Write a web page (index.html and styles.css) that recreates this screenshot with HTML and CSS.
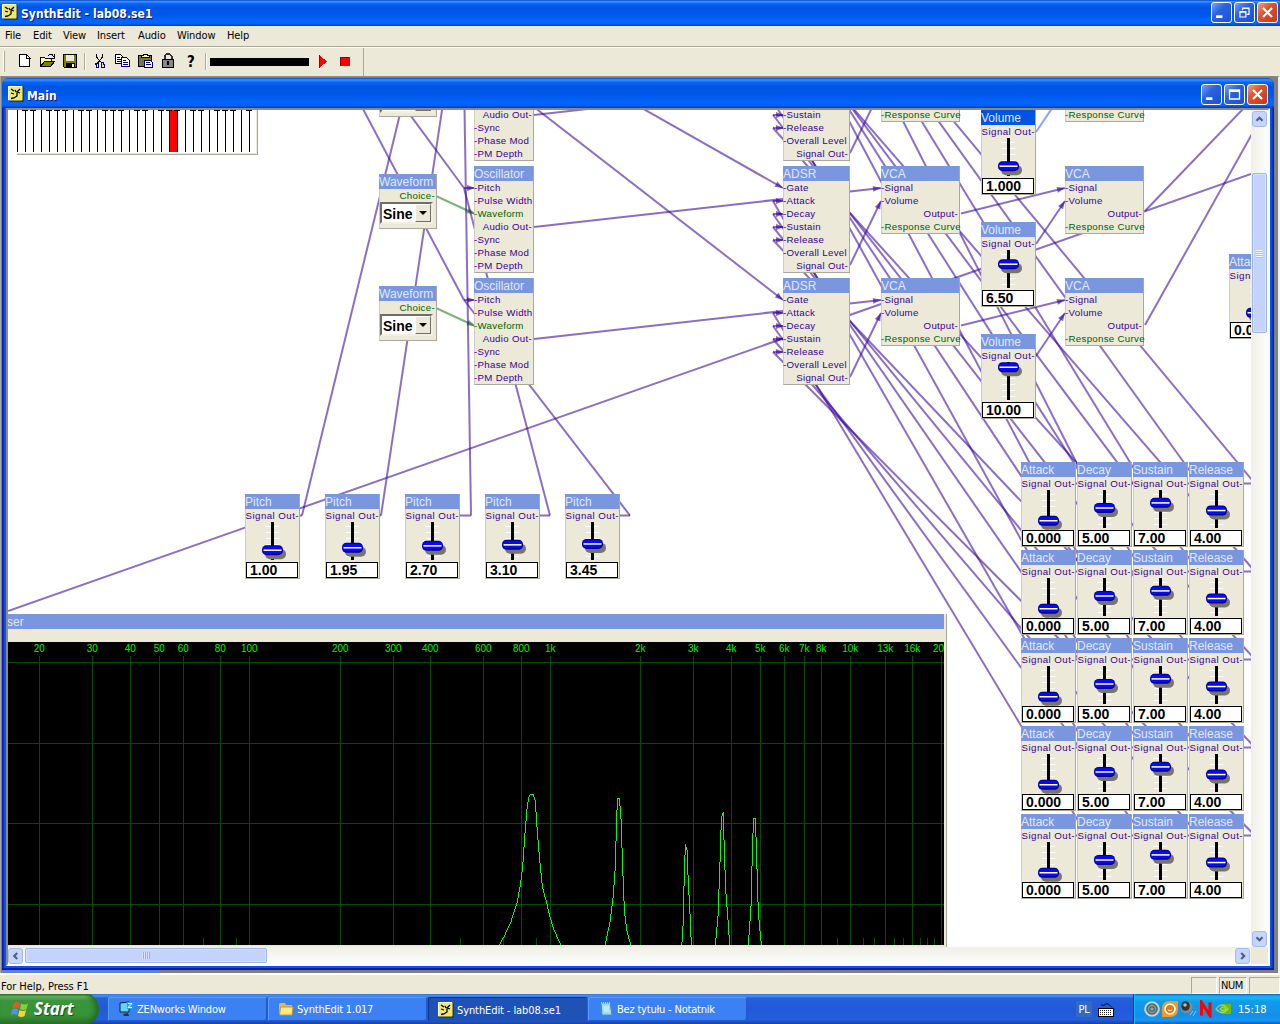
FILE: index.html
```html
<!DOCTYPE html>
<html lang="en">
<head>
<meta charset="utf-8">
<title>SynthEdit - lab08.se1</title>
<link rel="stylesheet" href="styles.css">
</head>
<body>
<svg class="defs" width="0" height="0">
  <symbol id="app" viewBox="0 0 16 16">
    <rect x="1" y="1" width="15" height="15" rx="1" fill="#3a3a20"/>
    <rect width="14.500" height="14.500" rx="1" fill="#efe96e"/>
    <path d="M.5 14V.5H14" stroke="#fffde0" fill="none"/>
    <path d="M3 3l3 2M7 4l1 2M12 3l-3 3 3 1M3 7l3 1M9 7v3l-3 2-3 .5" stroke="#000" stroke-width="1.300" fill="none"/>
  </symbol>
  <symbol id="min" viewBox="0 0 21 21"><path d="M4.500 15h7" stroke="#fff" stroke-width="3"/></symbol>
  <symbol id="max" viewBox="0 0 21 21"><path d="M5 5.500h11v10H5zM5 7h11" stroke="#fff" fill="none" stroke-width="1.500"/></symbol>
  <symbol id="restore" viewBox="0 0 21 21"><path d="M8.500 8V5.500h7v7H13M8 6h8M5.500 9.500h6.500v6H5.500zM5 10h7" stroke="#fff" fill="none" stroke-width="1.300"/></symbol>
  <symbol id="close" viewBox="0 0 21 21"><path d="M5.500 5.500l10 10M15.500 5.500l-10 10" stroke="#fff" stroke-width="2.400"/></symbol>
</svg>
<div class="screen">
  <header class="caption main-caption">
    <svg class="app-icon" width="16" height="16"><use href="#app"/></svg>
    <span class="caption-text">SynthEdit - lab08.se1</span>
    <span class="buttons">
      <svg class="cap-btn" viewBox="0 0 21 21"><use href="#min"/></svg>
      <svg class="cap-btn" viewBox="0 0 21 21"><use href="#restore"/></svg>
      <svg class="cap-btn red" viewBox="0 0 21 21"><use href="#close"/></svg>
    </span>
  </header>
  <nav class="menu"><span>File</span><span>Edit</span><span>View</span><span>Insert</span><span>Audio</span><span>Window</span><span>Help</span></nav>
  <div class="toolbar">
    <svg width="364" height="28" viewBox="0 48 364 28" shape-rendering="crispEdges">
      <path d="M3.500 51v21" stroke="#fff"/><path d="M4.500 51v21" stroke="#aca899"/>
      <path d="M19.500 54.500h7l3 3v9h-10z" fill="#fff" stroke="#000"/><path d="M26.500 54v4h4" fill="none" stroke="#000"/>
      <path d="M40.500 66v-8.500h4l1 1h6v3" fill="#ffff80" stroke="#000"/><path d="M40.500 66.500l4-5h10l-4 5z" fill="#808000" stroke="#000"/><path d="M48 56l2-1.500h2l2 2.500M54.500 54v4h-3" fill="none" stroke="#000"/>
      <path d="M63.500 54.500h13v13h-12l-1-1z" fill="#808000" stroke="#000"/><path d="M66 55h8v6h-8z" fill="#ece9d8"/><path d="M66 63h9v4h-9z" fill="#000"/><path d="M72 64h2v3h-2z" fill="#fff"/>
      <path d="M84.500 53v17" stroke="#aca899"/><path d="M85.500 53v17" stroke="#fff"/>
      <path d="M96.500 54v3l4 5M102.500 54v3l-5 6" fill="none" stroke="#000"/><path d="M95.500 63.500h3v4h-2.500v-3zM101 62.500h2l1 2v2.500h-3z" fill="none" stroke="#000080"/>
      <path d="M115.500 54.500h5l3 3v6h-8z" fill="#fff" stroke="#000"/><path d="M117 57.500h3M117 59.500h5M117 61.500h5" stroke="#000"/><path d="M121.500 57.500h5l3 3v6h-8z" fill="#fff" stroke="#000080"/><path d="M123 60.500h3M123 62.500h5M123 64.500h5" stroke="#000080"/>
      <path d="M138.500 55.500h13v11h-13z" fill="#77754a" stroke="#000"/><path d="M141 57h8v-2h-2v-1h-4v1h-2z" fill="#ffff80" stroke="#000"/><path d="M144.500 60.500h6l2 2v5h-8z" fill="#fff" stroke="#000080"/><path d="M146 62.500h4M146 64.500h5" stroke="#000080"/>
      <path d="M164.500 60v-4l2-2h3l2 2v4" fill="none" stroke="#333" stroke-width="2"/><path d="M162.500 59.500h11v8h-11z" fill="#888" stroke="#000"/><path d="M167 61h2v4h-2z" fill="#000"/>
      <text class="tool-help" x="187" y="67">?</text>
      <path d="M205.500 53v17" stroke="#aca899"/><path d="M206.500 53v17" stroke="#fff"/>
      <path d="M210 58h99v8h-99z"/>
      <path d="M319 55v13l8-6.500z" fill="#f00"/><path d="M319.500 55v13" stroke="#900"/>
      <path d="M340 57h10v9h-10z" fill="#f00"/><path d="M340.500 66v-8.500h9.500" stroke="#900" fill="none"/>
      <path d="M363.500 48v28" stroke="#aca899"/>
    </svg>
  </div>
  <main class="mdi">
    <section class="child">
      <div class="caption child-caption">
        <svg class="app-icon" width="16" height="16"><use href="#app"/></svg>
        <span class="caption-text">Main</span>
        <span class="buttons">
          <svg class="cap-btn" viewBox="0 0 21 21"><use href="#min"/></svg>
          <svg class="cap-btn" viewBox="0 0 21 21"><use href="#max"/></svg>
          <svg class="cap-btn red" viewBox="0 0 21 21"><use href="#close"/></svg>
        </span>
      </div>
      <div class="client">
        <div class="canvas" id="canvas">
          <svg class="wires" id="wires" width="1243" height="837" viewBox="8 110 1243 837"></svg>
        </div>
        <div class="vscroll">
          <svg class="sb" viewBox="0 0 15 16"><path d="M4 10l3.500-3.500L11 10" /></svg>
          <div class="vthumb"><i></i><i></i><i></i><i></i></div>
          <svg class="sb sb-end" viewBox="0 0 15 16"><path d="M4 6l3.500 3.500L11 6"/></svg>
        </div>
        <div class="hscroll">
          <svg class="sb" viewBox="0 0 15 16"><path d="M9.500 4.500L6 8l3.500 3.500"/></svg>
          <div class="hthumb"><i></i><i></i><i></i><i></i></div>
          <svg class="sb sb-end" viewBox="0 0 15 16"><path d="M6 4.500L9.500 8 6 11.500"/></svg>
        </div>
        <div class="corner"></div>
      </div>
    </section>
    <div class="minimized"></div>
  </main>
  <div class="status"><span class="help">For Help, Press F1</span><span class="pane p1"></span><span class="pane p2">NUM</span><span class="pane p3"></span></div>
  <footer class="taskbar">
    <div class="start">
      <svg width="20" height="20" viewBox="0 0 20 20"><path d="M3 4q3-2 6 0L7.500 9.500q-3-2-6 0z" fill="#e8562a"/><path d="M10 4.500q3 2 7 0L15.500 10q-3 2-6.500 0z" fill="#8ccc3c"/><path d="M1.200 10.500q3-2 6 0L6 16q-3-2-6 0z" fill="#5a8cf0"/><path d="M8.500 11q3 2 6.500 0L13.500 17q-3 2-6.500 0z" fill="#fcd03c"/></svg>
      <span>Start</span>
    </div>
    <div class="task"><svg width="16" height="16" viewBox="0 0 16 16"><path d="M2 2l9-1v10L2 11z" fill="#5fd4f4" stroke="#123"/><path d="M9 1h6v7H9z" fill="#2a9fdc"/><path d="M10 2.500h4l-4 4h4" stroke="#fff" fill="none"/><path d="M5 13l5-1 1 3H6z" fill="#333"/></svg><span>ZENworks Window</span></div>
    <div class="task"><svg width="16" height="16" viewBox="0 0 16 16"><path d="M1 3l1-1h5l1 2h6v10H1z" fill="#e8b93c"/><path d="M1.500 14l1-8H15l-1 8z" fill="#ffe88a" stroke="#c89420"/></svg><span>SynthEdit 1.017</span></div>
    <div class="task active"><svg width="16" height="16"><use href="#app"/></svg><span>SynthEdit - lab08.se1</span></div>
    <div class="task"><svg width="16" height="16" viewBox="0 0 16 16"><path d="M3 2h9l2 12H4z" fill="#9fdcf0" stroke="#4a90b0"/><path d="M3 2h9" stroke="#e0c070" stroke-width="2" stroke-dasharray="1 1"/><path d="M5 6h6M5 8h6M6 10h6" stroke="#d8f6ff"/></svg><span>Bez tytułu - Notatnik</span></div>
    <div class="lang">PL</div>
    <svg class="kbd" width="16" height="14" viewBox="0 0 16 14"><path d="M3 1.500q2 2 4 0t4 0 3 3" fill="none" stroke="#111"/><rect x=".5" y="5.500" width="15" height="8" fill="#fff" stroke="#000"/><path d="M2 7.500h12M2 9.500h12M2 11.500h12" stroke="#222" stroke-dasharray="1 1"/></svg>
    <div class="tray">
      <svg width="88" height="18" viewBox="1143 1000 88 18">
        <circle cx="1152" cy="1009" r="7.800" fill="#c4d2d5"/><circle cx="1152" cy="1009" r="5.800" fill="#4c656a"/><circle cx="1152" cy="1009" r="3.500" fill="none" stroke="#8aa2a4" stroke-width="1.300"/><circle cx="1152" cy="1009" r="1.500" fill="#9ab"/>
        <path d="M1162 1009q0-8 8-8h8v8q0 8-8 8h-8z" fill="#f19a1f"/><circle cx="1170" cy="1009" r="5.800" fill="#fff"/><circle cx="1170" cy="1009" r="4" fill="#e8760a"/><path d="M1168 1010q2 1.500 4 0" stroke="#fff" fill="none"/>
        <ellipse cx="1186.500" cy="1007" rx="6" ry="6" fill="#8a8a8a"/><ellipse cx="1185.500" cy="1006" rx="4.300" ry="4.800" fill="#333"/><circle cx="1185" cy="1005" r="1.800" fill="#bbb"/><path d="M1190 1015l3-4M1193 1016l3-5" stroke="#93b7ff"/>
        <path d="M1201.500 1015.500v-13l8.500 13v-13" fill="none" stroke="#f00" stroke-width="3"/>
        <path d="M1221 1004h10v10h-10z" fill="#76b900"/><path d="M1216 1009q6-8 12 0-6 7-12 0zM1220 1009q3-4 6 0-3 3-6 0z" fill="none" stroke="#9fdc50" stroke-width="1.200"/>
      </svg>
      <span>15:18</span>
    </div>
  </footer>
</div>
<script src="script.js"></script>
</body>
</html>
```
FILE: styles.css
```css
* { box-sizing: border-box; }
body { margin: 0; font: 11px "DejaVu Sans Condensed", "Liberation Sans", sans-serif; color: #000; overflow: hidden; }
svg { display: block; flex: none; }
.defs { position: absolute; }
.screen { width: 1280px; height: 1024px; display: flex; flex-direction: column; background: #ece9d8; overflow: hidden; }

.caption { display: flex; flex: none; color: #fff; background: linear-gradient(#0842c8 0, #3c91ff 6%, #0866f2 14%, #0055e5 28%, #0058ea 55%, #0266ff 82%, #0260f5 92%, #0038b8 100%); }
.main-caption { height: 26px; padding: 2px 2px 0 2px; }
.app-icon { margin-top: 2px; }
.caption-text { font: bold 12px/24px "DejaVu Sans Condensed", sans-serif; letter-spacing: .05px; margin-left: 3px; text-shadow: 1px 1px 0 #0a1883; white-space: nowrap; }
.buttons { margin-left: auto; display: flex; gap: 2px; }
.cap-btn { width: 21px; height: 21px; border: 1px solid #fff; border-radius: 3px; background: linear-gradient(135deg, #7ba0f6, #2a62e4 40%, #1c50d4); }
.cap-btn.red { background: linear-gradient(135deg, #f0a085, #e0502c 40%, #c93a12); }

.menu { height: 20px; flex: none; display: grid; grid-template-columns: 28px 30px 34px 41px 39px 50px 40px; padding-left: 5px; line-height: 20px; letter-spacing: -.1px; }
.toolbar { height: 30px; flex: none; border-top: 1px solid #aca899; box-shadow: inset 0 1px #fff; padding-top: 1px; }
.tool-help { font: bold 15px "DejaVu Sans Condensed", sans-serif; }

.mdi { height: 897px; flex: none; background: #808080; border-top: 1px solid #8d8a7c; border-right: 2px solid #f4f2e8; border-left: 1px solid #aca899; padding: 1px 0 0 1px; }
.child { width: 1272px; height: 892px; background: linear-gradient(90deg, #0016b0 0, #0b55ee 3px, #0b55ee 1269px, #0016a0 1272px); box-shadow: inset 0 -2px #0020a8; border-radius: 7px 7px 0 0; padding: 0 4px 4px; overflow: hidden; }
.child-caption { height: 30px; margin: 0 -4px; padding: 6px 6px 0 6px; }
.child-caption .app-icon { margin-top: 2px; }
.client { width: 1264px; height: 858px; border: 2px solid; border-color: #8e8b7c #fff #fff #8e8b7c; background: #fff; display: grid; grid-template-columns: 1243px 17px; grid-template-rows: 837px 17px; }
.minimized { width: 156px; height: 3px; margin-left: 2px; background: #5c7fe0; border-radius: 0 0 6px 0; }
.corner { background: #ece9d8; }

.vscroll { display: flex; flex-direction: column; align-items: center; background: linear-gradient(90deg, #f0efe8, #fefefb); padding: 1px 0 0; }
.hscroll { display: flex; align-items: center; background: linear-gradient(#f0efe8, #fefefb); padding-right: 1px; }
.sb { width: 15px; height: 16px; border: 1px solid #a5bbef; border-radius: 3px; background: #c6d5fd; }
.sb path { fill: none; stroke: #4d6185; stroke-width: 2.500; }
.vscroll .sb-end { margin-top: auto; }
.hscroll .sb-end { margin-left: auto; }
.vthumb, .hthumb { border: 1px solid #9db5ee; border-radius: 2px; background: #c3d3fc; display: flex; justify-content: center; align-items: center; gap: 1px; box-shadow: inset 0 0 0 1px #d6e2ff; }
.vthumb { width: 15px; height: 160px; margin-top: 46px; flex-direction: column; }
.vthumb i { width: 7px; height: 1px; background: #eef4fe; box-shadow: 0 .5px #8cb0f8; }
.hthumb { width: 242px; height: 15px; margin-left: 2px; }
.hthumb i { width: 1px; height: 7px; background: #8cb0f8; box-shadow: -.5px 0 #eef4fe; }

.canvas { position: relative; overflow: hidden; background: #fff; font-family: "Liberation Sans", sans-serif; }
.wires { position: absolute; left: 0; top: 0; }
.wires line { stroke: #330099; stroke-width: 2; opacity: .56; }
.wires polygon { fill: #330099; opacity: .6; }
.wires .green { stroke: #1b7a1b; }
.wires polygon.green { fill: #1b7a1b; stroke: none; }
.wires .sel { stroke: #2a5cff; }

.module { position: absolute; background: #ece9d8; border: 1px solid #aca899; border-left-color: #d0cdbd; border-top: 0; display: flex; flex-direction: column; }
.module h3 { margin: 0 0 0 -1px; height: 15px; flex: none; background: #7a96df; color: #dfe8fa; font: 12px/16px "Liberation Sans", sans-serif; white-space: nowrap; }
.module h3.on { background: #0054e3; }
.port { height: 13px; flex: none; line-height: 13px; font-size: 9.700px; letter-spacing: .3px; color: #330099; white-space: nowrap; margin-left: -1px; }
.port::before { content: "-"; }
.port.out { text-align: right; padding-right: 1px; }
.port.out::before { content: none; }
.port.out::after { content: "-"; }
.port.g { color: #006000; }
.slider-mod .port { padding: 0; letter-spacing: .45px; }
.value { width: 52px; height: 16px; border: 1px solid #000; background: #fff; font: bold 14px/14px "Liberation Sans", sans-serif; padding-left: 3px; white-space: nowrap; }
.select { width: 53px; height: 22px; border: 2px solid; border-color: #716f64 #f1efe2 #f1efe2 #716f64; background: #fff; display: flex; font: bold 14px/20px "Liberation Sans", sans-serif; padding-left: 1px; justify-content: space-between; }
.select svg { width: 16px; height: 18px; border: 1px solid; border-color: #fff #716f64 #716f64 #fff; background: #ece9d8; }
.select.cut { height: 5px; border-top: 0; }
.select.cut svg { height: 3px; }

.keyboard { position: absolute; left: 9px; top: 0; width: 241px; height: 45px; border: solid #aca899; border-width: 0 1px 1px 0; background: #ece9d8; }
.analyser { position: absolute; left: 0; top: 504px; width: 939px; height: 333px; background: #ece9d8; border-right: 1px solid #aca899; }
.analyser h3 { margin: 0; width: 936px; height: 15px; background: #7a96df; color: #dfe8fa; font: 12px/16px "Liberation Sans", sans-serif; text-indent: -1px; }
.analyser svg { margin-top: 13px; background: #000; }
.analyser text { fill: #00f000; font: 10px "Liberation Sans", sans-serif; text-anchor: middle; }

.status { height: 21px; flex: none; border-top: 2px solid #fffef8; display: flex; gap: 2px; padding-top: 2px; }
.help { margin: 1px auto 0 1px; line-height: 18px; letter-spacing: -.05px; }
.pane { border: 1px solid; border-color: #aca899 #fff #fff #aca899; height: 17px; line-height: 16px; padding-left: 1px; letter-spacing: -.4px; }
.p1 { width: 26px; } .p2 { width: 28px; } .p3 { width: 31px; }

.taskbar { height: 30px; flex: none; display: flex; background: linear-gradient(#3168d5 0, #4993e6 5%, #245fdc 15%, #2259d8 50%, #245edb 85%, #1941a5 100%); color: #fff; padding-left: 0; }
.start { width: 99px; margin-right: 9px; border-radius: 0 12px 12px 0 / 0 15px 15px 0; background: linear-gradient(#2d7a2d 0, #6cb46c 8%, #3b953b 22%, #379337 70%, #2a722a 100%); box-shadow: inset -4px 0 5px #246b24; display: flex; align-items: center; padding-left: 11px; }
.start span { font: italic bold 17px/28px "Open Sans", sans-serif; letter-spacing: -.1px; margin-left: 3px; text-shadow: 1px 1px 1px #1c4a1c; }
.task { width: 159px; height: 24px; margin: 3px 1px 0 0; border-radius: 2px; background: #3c81f3; box-shadow: inset 1px 1px #5c9bff, inset -1px -1px #2158cc; display: flex; align-items: center; padding-left: 10px; gap: 3px; letter-spacing: -.2px; white-space: nowrap; }
.task.active { background: #1e52b7; box-shadow: inset 1px 1px #10358c; letter-spacing: -.1px; padding-top: 2px; }
.lang { margin: 7px 0 0 328px; width: 16px; height: 16px; background: #316ac5; font: 11px/18px "DejaVu Sans Condensed", sans-serif; letter-spacing: -.3px; text-align: center; }
.kbd { margin: 9px 0 0 6px; }
.tray { margin-left: auto; width: 147px; background: linear-gradient(#0c59b9 0, #139ee9 5%, #18b5f2 12%, #129be8 25%, #1290e8 70%, #1895f0 88%, #095bc9 100%); border-left: 1px solid #0a3c90; box-shadow: inset 1px 0 #18bbff; display: flex; align-items: center; padding-left: 9px; gap: 7px; }
```
FILE: script.js
```js
const OX = 8, OY = 110;
const canvas = document.getElementById('canvas');
const parts = [];

// Wires
function line(x1, y1, x2, y2, cls = '') {
  parts.push(`<line class="${cls}" x1="${x1}" y1="${y1}" x2="${x2}" y2="${y2}"/>`);
}
function arrow(x1, y1, x2, y2, cls = '') {
  line(x1, y1, x2, y2, cls);
  const a = Math.atan2(y2 - y1, x2 - x1), c = Math.cos(a), s = Math.sin(a);
  const bx = x2 - 8 * c, by = y2 - 8 * s;
  parts.push(`<polygon class="${cls}" points="${x2},${y2} ${bx - 3 * s},${by + 3 * c} ${bx + 3 * s},${by - 3 * c}"/>`);
}
for (let i = 0; i < 5; i++) {
  for (let k = 0; k < 4; k++) {
    const sx = 1087 + 56 * k, sy = 483.5 + 88 * i, ty = -135 + 112 * i + 13 * k;
    line(sx - 11, sy, sx, sy);
    line(sx, sy, 773, ty);
    arrow(773, ty, 784, ty);
  }
}
for (const t of [54, 166, 278]) {
  arrow(534, t + 61, 881, t + 22);
  arrow(850, t + 99, 881, t + 35);
  arrow(961, t + 47.5, 1065, t + 22);
  arrow(1036, t + 78, 1065, t + 35, t === 54 ? 'sel' : '');
  arrow(436, t + 30, 475, t + 48, 'green');
  arrow(464, t + 22, 475, t + 22);
}
arrow(640, 107, 783, 188);
arrow(534, 107, 783, 300);
line(8, 611, 1251, 174);
line(363, 109, 464, 300);
line(405, 108, 464, 188);
line(1145, 211, 1243, 109);
line(1145, 325, 1252, 134);
[[302, 464, -148], [381, 464, -36], [471, 464, 76], [550, 464, 188], [630, 464, 300]].forEach(([x, tx, ty], i) => {
  line(299 + 80 * i, 515.5, x, 515.5);
  line(x, 515.5, tx, ty);
});
document.getElementById('wires').innerHTML = parts.join('');

// Modules; one without a title is scrolled partly above the view
function module(x, y, w, h, title, body, cls = '', on = false) {
  const el = document.createElement('div');
  el.className = 'module ' + cls;
  el.style.cssText = `left:${x - OX}px;top:${y - OY}px;width:${w}px;height:${h}px`;
  el.innerHTML = (title ? `<h3 class="${on ? 'on' : ''}">${title}</h3>` : '') + body;
  canvas.append(el);
}
const ports = list => list.map(p => {
  const cls = (p.endsWith('>') ? ' out' : '') + (/Waveform|Choice|Curve/.test(p) ? ' g' : '');
  return `<div class="port${cls}">${p.replace('>', '')}</div>`;
}).join('');
const dropButton = '<svg viewBox="0 0 14 16"><path d="M3 6h8l-4 4z"/></svg>';

const OSC = ['Pitch', 'Pulse Width', 'Waveform', 'Audio Out>', 'Sync', 'Phase Mod', 'PM Depth'];
const ADSR = ['Gate', 'Attack', 'Decay', 'Sustain', 'Release', 'Overall Level', 'Signal Out>'];
const VCA = ['Signal', 'Volume', 'Output>', 'Response Curve'];

module(474, 108, 60, 53, '', ports(OSC.slice(3)));
module(783, 108, 67, 53, '', ports(ADSR.slice(3)));
module(881, 108, 79, 14, '', ports(VCA.slice(3)));
module(1065, 108, 79, 14, '', ports(VCA.slice(3)));
module(379, 108, 58, 9, '', '<div class="select cut"><span></span><svg></svg></div>');
for (const t of [166, 278]) {
  module(474, t, 60, 107, 'Oscillator', ports(OSC));
  module(783, t, 67, 107, 'ADSR', ports(ADSR));
  for (const x of [881, 1065]) module(x, t, 79, 68, 'VCA', ports(VCA));
  module(379, t + 8, 58, 55, 'Waveform', ports(['Choice>']) + `<div class="select">Sine${dropButton}</div>`);
}

function slider(x, y, title, value, on) {
  const k = 58.7 - 2.55 * parseFloat(value) - 28;
  let ticks = '';
  for (let i = 0; i < 6; i++) ticks += `<path d="M20 ${4.5 + 6 * i}h13" stroke="#fff"/>`;
  module(x, y, 55, 85, title, ports(['Signal Out>']) +
    `<svg width="53" height="40" viewBox="0 0 53 40">${ticks}
      <rect x="25" width="3" height="38"/>
      <rect x="19" y="${k - 1}" width="21" height="10" rx="5" fill="#77756c"/>
      <rect x="16" y="${k - 5}" width="21" height="10" rx="4.500" fill="#000090"/>
      <rect x="17" y="${k - 4}" width="19" height="7.500" rx="3.500" fill="#0808ff"/>
      <rect x="17.500" y="${k - .7}" width="18" height="1.500" fill="#fff"/></svg>
    <div class="value">${value}</div>`, 'slider-mod', on);
}
slider(981, 110, 'Volume', '1.000', true);
slider(981, 222, 'Volume', '6.50');
slider(981, 334, 'Volume', '10.00');
['1.00', '1.95', '2.70', '3.10', '3.45'].forEach((v, i) => slider(245 + 80 * i, 494, 'Pitch', v));
for (let i = 0; i < 5; i++) {
  [['Attack', '0.000'], ['Decay', '5.00'], ['Sustain', '7.00'], ['Release', '4.00']]
    .forEach(([n, v], k) => slider(1021 + 56 * k, 462 + 88 * i, n, v));
}
slider(1229, 254, 'Attack', '0.000');

// Keyboard
let keys = '<rect width="239" height="43" fill="#fff"/><rect x="152" width="8" height="42" fill="#f00"/>';
for (let i = 0; i < 30; i++) {
  keys += `<rect x="${i * 8}" width="1" height="42"/>`;
  if (![0, 3, 7, 10, 14, 17, 21, 24, 28].includes(i)) keys += `<rect x="${i * 8 - 3}" width="6" height="1"/>`;
}
const kb = document.createElement('div');
kb.className = 'keyboard';
kb.innerHTML = `<svg width="239" height="43">${keys}</svg>`;
canvas.append(kb);

// Spectrum analyser
const marks = { 39: '20', 92: '30', 130: '40', 159: '50', 183: '60', 220: '80', 249: '100', 340: '200', 393: '300', 430: '400', 483: '600', 521: '800', 550: '1k', 640: '2k', 693: '3k', 731: '4k', 760: '5k', 784: '6k', 804: '7k', 821: '8k', 850: '10k', 885: '13k', 912: '16k', 941: '20' };
let grid = '';
for (const [x, label] of Object.entries(marks)) {
  grid += `<rect x="${x}" y="656" width="1" height="289" fill="#005000"/><text x="${x === '941' ? 938.5 : +x + .3}" y="652">${label}</text>`;
}
for (const y of [662, 743, 823, 904]) grid += `<rect x="8" y="${y}" width="936" height="1" fill="#005000"/>`;
for (const x of [203, 236, 460, 503, 536, 837, 863, 874, 894, 903, 920, 927, 934]) grid += `<rect x="${x}" y="938" width="1" height="7" fill="#005000"/>`;
const curves = [
  '58,1034 72,1010 92,968 112,905 122,850 128,800 134,710 138,665 142,615 148,588 153,583 160,583 166,605 171,680 178,770 187,860 200,908 208,945 222,990 242,1034',
  '376,1034 390,965 400,885 406,800 410,650 413,595 418,595 423,655 428,800 433,930 440,990 452,1034',
  '604,1034 608,1020 612,860 616,733 621,750 625,850 630,940 634,1034',
  '706,1034 714,950 721,760 724,655 730,637 733,760 738,880 744,960 749,1034',
  '805,1034 813,920 818,720 821,655 826,655 829,740 835,940 844,1034'
].map(p => `<polyline points="${p}" fill="none" stroke="#0f0" stroke-width="3"/>`).join('');
const an = document.createElement('div');
an.className = 'analyser';
an.innerHTML = `<h3>ser</h3><svg width="936" height="303" viewBox="8 642 936 303">${grid}<g transform="translate(480 600) scale(.33333)" shape-rendering="crispEdges">${curves}</g></svg>`;
canvas.append(an);
```
